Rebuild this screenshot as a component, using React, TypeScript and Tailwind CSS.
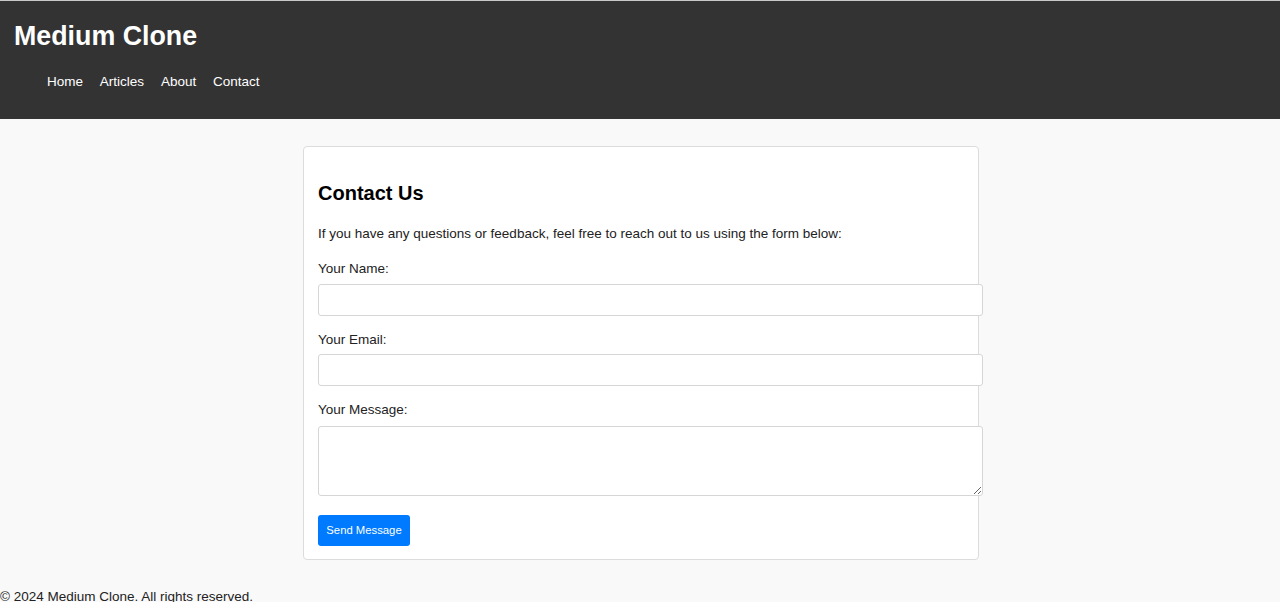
export default function App() {
  const font = { fontFamily: '"Liberation Sans", Arial, sans-serif' };
  return (
    <div style={font} className="min-h-[602px] bg-[#f9f9f9] text-[#333]">
      <header className="border-t border-[#c9c9c9] bg-[#333] h-[119px] pl-[14px] text-white">
        <h1 className="pt-[20px] text-[26.8px] leading-[31px] font-bold">Medium Clone</h1>
        <nav className="mt-[22px] pl-[33px]">
          <ul className="flex gap-[16.8px] text-[13.5px] leading-[16px]">
            <li>Home</li>
            <li>Articles</li>
            <li>About</li>
            <li>Contact</li>
          </ul>
        </nav>
      </header>
      <main className="pt-[27px] pl-[2px]">
        <div className="mx-auto w-[676px] bg-white border border-[#dcdcdc] rounded-[4px] px-[14px] pt-[35px] pb-[13px]">
          <h2 className="text-[20px] leading-[23px] font-bold text-black">Contact Us</h2>
          <p className="mt-[21px] text-[13.5px] leading-[16px] text-[#222]">
            If you have any questions or feedback, feel free to reach out to us using the form below:
          </p>
          <form className="flex flex-col" onSubmit={(e) => e.preventDefault()}>
            <label className="mt-[19px] text-[13.5px] leading-[16px] text-[#222]">Your Name:</label>
            <input type="text" className="mt-[7px] w-[665px] h-[32px] border border-[#d6d6d6] rounded-[3px] bg-white" />
            <label className="mt-[16px] text-[13.5px] leading-[16px] text-[#222]">Your Email:</label>
            <input type="email" className="mt-[6px] w-[665px] h-[32px] border border-[#d6d6d6] rounded-[3px] bg-white" />
            <label className="mt-[16px] text-[13.5px] leading-[16px] text-[#222]">Your Message:</label>
            <textarea className="mt-[8px] w-[665px] h-[70px] border border-[#d6d6d6] rounded-[3px] bg-white resize" />
            <div className="mt-[19px]">
              <button type="submit" className="h-[31px] w-[92px] bg-[#007bff] text-white text-[11.3px] rounded-[3px]">
                Send Message
              </button>
            </div>
          </form>
        </div>
      </main>
      <footer className="mt-[29px] text-[13.5px] leading-[16px] text-[#222]">
        © 2024 Medium Clone. All rights reserved.
      </footer>
    </div>
  );
}
